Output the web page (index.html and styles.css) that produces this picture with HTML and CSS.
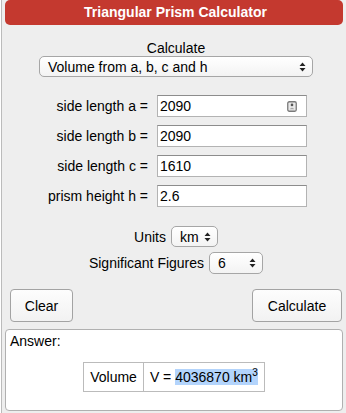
FILE: index.html
```html
<!DOCTYPE html>
<html>
<head>
    <link rel="stylesheet" href="styles.css">
</head>

<body>

    <div class="calc">
        <div class="head">Triangular Prism Calculator</div>

        <div class="mode">
            <div class="caption">Calculate</div>
            <div class="select wide">
                <span>Volume from a, b, c and h</span>
                <svg width="7" height="10" viewBox="0 0 7 10"><path d="M0.5 4 L3.5 0.5 L6.5 4 Z M0.5 6 L3.5 9.5 L6.5 6 Z" fill="#222"/></svg>
            </div>
        </div>

        <div class="fields">
            <div class="row">
                <label>side length a =</label>
                <div class="input">
                    <span>2090</span>
                    <svg width="10" height="11" viewBox="0 0 10 11">
                        <rect x="0.75" y="0.75" width="8.5" height="9.5" rx="1.5" fill="#e8e8e8" stroke="#7a7a7a" stroke-width="1.3"/>
                        <circle cx="5" cy="3.9" r="1.3" fill="#555"/>
                        <path d="M2.8 8.3 Q5 5.4 7.2 8.3 Z" fill="#a8a8a8"/>
                    </svg>
                </div>
            </div>
            <div class="row">
                <label>side length b =</label>
                <div class="input"><span>2090</span></div>
            </div>
            <div class="row">
                <label>side length c =</label>
                <div class="input"><span>1610</span></div>
            </div>
            <div class="row">
                <label>prism height h =</label>
                <div class="input"><span>2.6</span></div>
            </div>
        </div>

        <div class="opt first">
            <span>Units</span>
            <div class="select units">
                <span>km</span>
                <svg width="7" height="10" viewBox="0 0 7 10"><path d="M0.5 4 L3.5 0.5 L6.5 4 Z M0.5 6 L3.5 9.5 L6.5 6 Z" fill="#222"/></svg>
            </div>
        </div>
        <div class="opt second">
            <span>Significant Figures</span>
            <div class="select sig">
                <span>6</span>
                <svg width="7" height="10" viewBox="0 0 7 10"><path d="M0.5 4 L3.5 0.5 L6.5 4 Z M0.5 6 L3.5 9.5 L6.5 6 Z" fill="#222"/></svg>
            </div>
        </div>

        <div class="buttons">
            <button class="btn clear">Clear</button>
            <button class="btn go">Calculate</button>
        </div>

        <div class="answer">
            <div class="answer-title">Answer:</div>
            <table class="result">
                <tr>
                    <td>Volume</td>
                    <td>V = <span class="sel">4036870 km<sup>3</sup></span></td>
                </tr>
            </table>
        </div>
    </div>

</body>

</html>
```

FILE: styles.css
```css
body {
    margin: 0;
    background: #fff;
    color: #000;
    font-family: "Liberation Sans", Arial, sans-serif;
    font-size: 14px;
}

.calc {
    margin-left: 1px;
    width: 338px;
    padding: 0 3px 3px;
    border: 1px solid #bbb;
    border-top: none;
    background: #eee;
}

.head {
    height: 25px;
    line-height: 24px;
    padding-left: 3px;
    background: #c4392f;
    color: #fff;
    font-weight: bold;
    text-align: center;
    border-radius: 5px;
}

.mode {
    padding-top: 15px;
    padding-left: 4px;
    display: flex;
    flex-direction: column;
    align-items: center;
}

.caption {
    line-height: 16px;
}

.select {
    display: flex;
    align-items: center;
    justify-content: space-between;
    box-sizing: border-box;
    height: 21px;
    padding: 0 6px 0 8px;
    border: 1px solid #a6a6a6;
    border-radius: 5px;
    background: linear-gradient(#fff, #f3f3f3);
}

.wide {
    width: 274px;
}

.units {
    width: 47px;
}

.sig {
    width: 54px;
    height: 22px;
}

.fields {
    margin-top: 18px;
    display: flex;
    flex-direction: column;
    gap: 8px;
}

.row {
    display: flex;
    align-items: center;
}

.row label {
    width: 143px;
    text-align: right;
}

.input {
    display: flex;
    align-items: center;
    justify-content: space-between;
    box-sizing: border-box;
    width: 150px;
    height: 22px;
    margin-left: 9px;
    padding: 0 9px 0 2px;
    border: 1px solid #b3b3b3;
    border-top-color: #8c8c8c;
    background: #fff;
}

.opt {
    display: flex;
    align-items: center;
    justify-content: center;
    gap: 5px;
    padding-left: 4px;
}

.opt.first {
    margin-top: 19px;
}

.opt.second {
    margin-top: 5px;
}

.buttons {
    margin-top: 15px;
    display: flex;
    justify-content: space-between;
    padding: 0 1px 0 5px;
}

.btn {
    height: 33px;
    padding: 0;
    border: 1px solid #a3a3a3;
    border-radius: 4px;
    background: linear-gradient(#fdfdfd, #f2f2f2);
    color: #000;
    font-family: "Liberation Sans", Arial, sans-serif;
    font-size: 14px;
}

.clear {
    width: 63px;
}

.go {
    width: 90px;
}

.answer {
    margin-top: 7px;
    height: 82px;
    box-sizing: border-box;
    padding: 3px 4px 0;
    border: 1px solid #b0b0b0;
    border-radius: 4px;
    background: #fff;
}

.answer-title {
    line-height: 16px;
}

.result {
    margin: 13px auto 0;
    border-collapse: collapse;
}

.result td {
    padding: 6px 6px;
    line-height: 16px;
    border: 1px solid #bbb;
    background: #fff;
}

.sel {
    background: #b3d4fc;
}

sup {
    font-size: 10px;
    line-height: 0;
}
```
